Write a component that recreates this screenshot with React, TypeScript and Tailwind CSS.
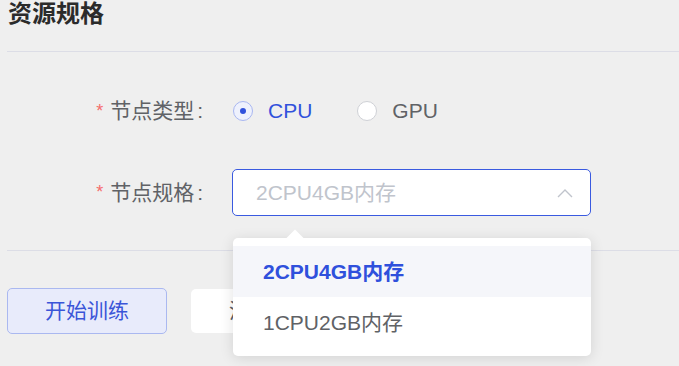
import React from 'react';

const font = { fontFamily: '"Liberation Sans", "Noto Sans CJK SC", sans-serif' };

const Label = ({ text }: { text: string }) => (
  <div className="flex w-[203px] shrink-0 items-center justify-end text-[21px] text-[#606266]">
    <span className="mr-[7px] text-[18px] text-[#f56c6c]">*</span>
    <span>{text}</span>
    <span className="ml-[3px]">:</span>
  </div>
);

const Radio = ({ label, checked }: { label: string; checked?: boolean }) => (
  <label className="flex items-center gap-[15px]">
    <span
      className={
        checked
          ? 'flex h-[20px] w-[20px] items-center justify-center rounded-full border border-[#a9b7f1] bg-[#eef1fd]'
          : 'flex h-[20px] w-[20px] items-center justify-center rounded-full border border-[#cfd1d6] bg-white'
      }
    >
      {checked && <span className="h-[6px] w-[6px] rounded-full bg-[#3152dc]" />}
    </span>
    <span className={checked ? 'text-[21px] text-[#3152dc]' : 'text-[21px] text-[#606266]'}>{label}</span>
  </label>
);

export default function App() {
  return (
    <div className="relative h-[366px] w-[679px] overflow-hidden bg-[#efefef]" style={font}>
      <h2 className="pl-[8px] text-[24px] font-bold leading-[28px] text-[#2b2b2b]">资源规格</h2>
      <div className="ml-[7px] mt-[23px] h-px bg-[#dcdde6]" />

      <div className="mt-[39px] flex h-[40px] items-center">
        <Label text="节点类型" />
        <div className="ml-[30px] flex items-center gap-[45px]">
          <Radio label="CPU" checked />
          <Radio label="GPU" />
        </div>
      </div>

      <div className="mt-[38px] flex h-[47px] items-center">
        <Label text="节点规格" />
        <div className="ml-[29px] flex h-[47px] w-[359px] items-center justify-between rounded-[5px] border border-[#3a5ae0] bg-white pl-[23px] pr-[17px]">
          <span className="text-[21px] text-[#c0c4cc]">2CPU4GB内存</span>
          <svg width="16" height="10" viewBox="0 0 16 10" fill="none">
            <path d="M1 9 L8 2 L15 9" stroke="#c0c4cc" strokeWidth="1.4" />
          </svg>
        </div>
      </div>

      <div className="ml-[7px] mt-[34px] h-px bg-[#dcdde6]" />

      <div className="ml-[7px] mt-[37px] flex items-center gap-[24px]">
        <button className="h-[46px] w-[160px] rounded-[5px] border border-[#aab8f0] bg-[#e8ebfb] text-[21px] text-[#3a55d8]">
          开始训练
        </button>
        <button className="h-[44px] w-[160px] rounded-[5px] bg-white text-[21px] text-[#606266]">
          清空配置
        </button>
      </div>

      <div className="absolute left-[233px] top-[238px] w-[358px] rounded-[5px] bg-white py-[8px] shadow-[0_2px_14px_rgba(0,0,0,0.12)]">
        <div className="absolute left-[56px] top-[-6px] h-[12px] w-[12px] rotate-45 bg-white" />
        <div className="relative flex h-[51px] items-center bg-[#f5f6fa] pl-[30px] text-[21px] font-bold text-[#2f50dc]">
          2CPU4GB内存
        </div>
        <div className="flex h-[51px] items-center pl-[30px] text-[21px] text-[#606266]">1CPU2GB内存</div>
      </div>
    </div>
  );
}
